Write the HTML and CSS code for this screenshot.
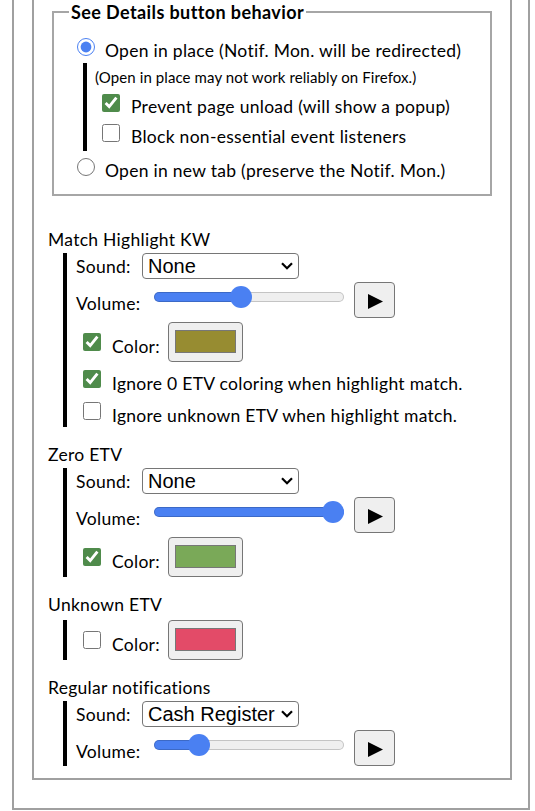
FILE: index.html
```html
<!DOCTYPE html>
<html>
<head>
<meta charset="utf-8">
<link rel="stylesheet" href="styles.css">
</head>
<body>
<div class="outer">
  <div class="inner">
    <fieldset class="details">
      <legend>See Details button behavior</legend>
      <label class="radio-row r1"><input type="radio" name="sd" checked><span>Open in place (Notif. Mon. will be redirected)</span></label>
      <div class="sub">
        <div class="note">(Open in place may not work reliably on Firefox.)</div>
        <label class="fcb-row"><input type="checkbox" checked><span>Prevent page unload (will show a popup)</span></label>
        <label class="fcb-row"><input type="checkbox"><span>Block non-essential event listeners</span></label>
      </div>
      <label class="radio-row r2"><input type="radio" name="sd"><span>Open in new tab (preserve the Notif. Mon.)</span></label>
    </fieldset>

    <section class="group first">
      <div class="group-title">Match Highlight KW</div>
      <div class="group-body">
        <div class="row sound-row">
          <span class="lbl-sound">Sound:</span>
          <span class="select-wrap"><select><option>None</option></select><svg class="chev" width="12" height="8" viewBox="0 0 12 8"><polyline points="1,1.2 6,6.2 11,1.2" fill="none" stroke="#000" stroke-width="2.2"/></svg></span>
        </div>
        <div class="row vol-row">
          <span class="lbl-vol">Volume:</span>
          <input class="vol" type="range" min="0" max="1" step="0.01" value="0.45" style="--p:46%">
          <button class="play"><svg width="15" height="15" viewBox="0 0 15 15"><polygon points="0,0 15,7.5 0,15" fill="#000"/></svg></button>
        </div>
        <div class="row color-row">
          <input class="cb" type="checkbox" checked>
          <span class="lbl-color">Color:</span>
          <input class="swatch" type="color" value="#978c31">
        </div>
        <label class="row check-row"><input class="cb" type="checkbox" checked><span class="ctext">Ignore 0 ETV coloring when highlight match.</span></label>
        <label class="row check-row last"><input class="cb" type="checkbox"><span class="ctext">Ignore unknown ETV when highlight match.</span></label>
      </div>
    </section>

    <section class="group">
      <div class="group-title">Zero ETV</div>
      <div class="group-body">
        <div class="row sound-row">
          <span class="lbl-sound">Sound:</span>
          <span class="select-wrap"><select><option>None</option></select><svg class="chev" width="12" height="8" viewBox="0 0 12 8"><polyline points="1,1.2 6,6.2 11,1.2" fill="none" stroke="#000" stroke-width="2.2"/></svg></span>
        </div>
        <div class="row vol-row">
          <span class="lbl-vol">Volume:</span>
          <input class="vol" type="range" min="0" max="1" step="0.01" value="1" style="--p:100%">
          <button class="play"><svg width="15" height="15" viewBox="0 0 15 15"><polygon points="0,0 15,7.5 0,15" fill="#000"/></svg></button>
        </div>
        <div class="row color-row">
          <input class="cb" type="checkbox" checked>
          <span class="lbl-color">Color:</span>
          <input class="swatch" type="color" value="#7aa958">
        </div>
      </div>
    </section>

    <section class="group">
      <div class="group-title">Unknown ETV</div>
      <div class="group-body">
        <div class="row color-row only">
          <input class="cb" type="checkbox">
          <span class="lbl-color">Color:</span>
          <input class="swatch" type="color" value="#e34b68">
        </div>
      </div>
    </section>

    <section class="group">
      <div class="group-title">Regular notifications</div>
      <div class="group-body">
        <div class="row sound-row">
          <span class="lbl-sound">Sound:</span>
          <span class="select-wrap"><select><option>Cash Register</option></select><svg class="chev" width="12" height="8" viewBox="0 0 12 8"><polyline points="1,1.2 6,6.2 11,1.2" fill="none" stroke="#000" stroke-width="2.2"/></svg></span>
        </div>
        <div class="row vol-row">
          <span class="lbl-vol">Volume:</span>
          <input class="vol" type="range" min="0" max="1" step="0.01" value="0.2" style="--p:24%">
          <button class="play"><svg width="15" height="15" viewBox="0 0 15 15"><polygon points="0,0 15,7.5 0,15" fill="#000"/></svg></button>
        </div>
      </div>
    </section>
  </div>
</div>
</body>
</html>
```
FILE: styles.css
```css
* { box-sizing: border-box; }
html, body { margin: 0; padding: 0; background: #fff; }
body {
  font-family: Lato, "Noto Sans", sans-serif;
  font-size: 17.5px;
  letter-spacing: 0.28px;
  color: #000;
}

.outer {
  margin-left: 12px;
  width: 518px;
  border: 2px solid #a0a0a0;
  border-top: none;
  padding: 0 16px 28px 18px;
}
.inner {
  border: 2px solid #a0a0a0;
  border-top: none;
  padding: 0 0 12px 0;
}

/* fieldset */
.details {
  margin: 0 18px;
  border: 2px solid #a6a6a6;
  padding: 13px 0 5px 15px;
  min-width: 0;
}
.details legend {
  padding: 0 2px;
  font-weight: 700;
  font-size: 18px;
  letter-spacing: 0.4px;
  line-height: 24px;
}
.radio-row {
  display: flex;
  align-items: center;
  margin-left: 8px;
  white-space: nowrap;
}
.radio-row.r1 { height: 26px; }
.radio-row.r2 { height: 38px; }
.radio-row input {
  width: 18px;
  height: 18px;
  margin: 0 10px 7px 0;
  accent-color: #4a80f2;
}
.sub {
  margin-left: 14px;
  border-left: 4px solid #000;
  padding-left: 8px;
}
.note {
  height: 28px;
  display: flex;
  align-items: center;
  font-size: 15px;
  letter-spacing: 0.1px;
}
.fcb-row {
  height: 30px;
  display: flex;
  align-items: center;
  white-space: nowrap;
}
.fcb-row input {
  width: 18px;
  height: 18px;
  margin: 0 11px 7px 7px;
  accent-color: #4f8b4b;
}

/* groups */
.group { margin-top: 16px; padding-left: 14px; }
.group.first { margin-top: 32px; }
.group-title { height: 23px; line-height: 23px; }
.group-body {
  margin-left: 15px;
  border-left: 4px solid #000;
  padding-left: 9px;
}
.row { display: flex; align-items: center; white-space: nowrap; }
.sound-row { height: 26px; margin-top: 2px; }
.vol-row { height: 36px; margin-top: 3px; }
.color-row { height: 40px; margin-top: 4px; }
.check-row { height: 33px; }
.check-row.last { height: 32px; }

.lbl-sound { width: 66px; }
.lbl-vol { width: 78px; margin-top: 6px; }
.lbl-color { width: 56px; margin-top: 8px; }
.ctext { margin-top: 9px; }

.cb {
  width: 18px;
  height: 18px;
  margin: 0 11px 0 7px;
  accent-color: #4f8b4b;
}

.select-wrap {
  position: relative;
  display: block;
  width: 157px;
  height: 26px;
}
.select-wrap select {
  -webkit-appearance: none;
  appearance: none;
  display: block;
  width: 157px;
  height: 26px;
  margin: 0;
  padding: 0 20px 0 5px;
  border: 1px solid #767676;
  border-radius: 4px;
  background: #fff;
  color: #000;
  font-family: "Liberation Sans", Arial, sans-serif;
  font-size: 20px;
  letter-spacing: 0;
  line-height: 24px;
}
.chev {
  position: absolute;
  right: 6px;
  top: 9px;
}

.vol {
  -webkit-appearance: none;
  appearance: none;
  width: 190px;
  height: 22px;
  margin: 0 0 6px 0;
  padding: 0;
  background: transparent;
}
.vol::-webkit-slider-runnable-track {
  box-sizing: border-box;
  height: 10px;
  border-radius: 5px;
  background: linear-gradient(to right, #4a80f2 0, #4a80f2 var(--p), #efefef var(--p), #efefef 100%);
  box-shadow: inset 0 0 0 1px rgba(0, 0, 0, 0.18);
}
.vol::-webkit-slider-thumb {
  -webkit-appearance: none;
  appearance: none;
  width: 22px;
  height: 22px;
  border-radius: 50%;
  background: #4a80f2;
  border: none;
  margin-top: -6px;
}

.play {
  margin-left: 10px;
  width: 41px;
  height: 36px;
  padding: 0;
  border: 1px solid #767676;
  border-radius: 4px;
  background: #efefef;
  display: flex;
  align-items: center;
  justify-content: center;
}
.play svg { margin-top: 3px; margin-left: 1px; display: block; }

.swatch {
  width: 75px;
  height: 40px;
  margin: 0;
  padding: 7px 6px 8px;
  border: 1px solid #767676;
  border-radius: 4px;
  background: #efefef;
}
.swatch::-webkit-color-swatch-wrapper { padding: 0; }
.swatch::-webkit-color-swatch { border: 1px solid #777; border-radius: 0; }
```
